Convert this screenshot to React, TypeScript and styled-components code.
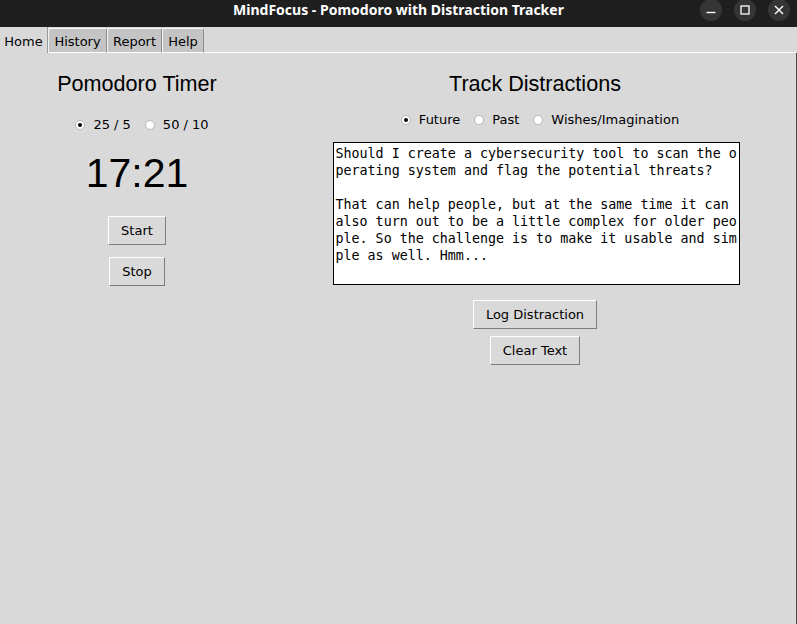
import React from "react";
import styled, { createGlobalStyle } from "styled-components";

const Global = createGlobalStyle`
  html, body { margin: 0; padding: 0; background: #d9d9d9; }
  #root { width: 797px; height: 624px; overflow: hidden; }
`;

const Window = styled.div`
  width: 797px;
  height: 624px;
  display: flex;
  flex-direction: column;
  background: #d9d9d9;
  font-family: "DejaVu Sans", sans-serif;
  color: #000;
`;

const TitleBar = styled.div`
  height: 27px;
  flex: none;
  background: #1f1f1f;
  display: grid;
  grid-template-columns: 1fr auto 1fr;
  align-items: start;
`;

const TitleText = styled.div`
  font-family: "Noto Sans", sans-serif;
  font-weight: 700;
  font-size: 14px;
  line-height: 20px;
  color: #ffffff;
`;

const Controls = styled.div`
  justify-self: end;
  display: flex;
  gap: 12px;
  padding: 0 7px 0 0;
`;

const CtrlButton = styled.div`
  width: 22px;
  height: 22px;
  border-radius: 50%;
  background: #353535;
  display: flex;
  align-items: center;
  justify-content: center;
  margin-top: -1px;
`;

const TabStrip = styled.div`
  height: 26px;
  flex: none;
  display: flex;
  align-items: flex-end;
`;

const Tab = styled.div<{ $selected?: boolean; $w: number }>`
  box-sizing: border-box;
  width: ${(p) => p.$w}px;
  font-size: 13px;
  text-align: center;
  line-height: 21px;
  white-space: nowrap;
  ${(p) =>
    p.$selected
      ? `
    height: 26px;
    padding-top: 4px;
    background: #d9d9d9;
    border-right: 1px solid #9a9a9a;
  `
      : `
    height: 25px;
    padding-top: 2px;
    background: #c4c4c4;
    border-top: 1px solid #f4f4f4;
    border-left: 1px solid #f4f4f4;
    border-right: 1px solid #8c8c8c;
    border-bottom: 1px solid #ffffff;
    border-radius: 3px 3px 0 0;
  `}
`;

const TabFill = styled.div`
  flex: 1;
  height: 1px;
  background: #ffffff;
  margin-right: 1px;
`;

const Body = styled.div`
  flex: 1;
  display: flex;
  border-right: 1px solid #4a4a4a;
`;

const Column = styled.div<{ $w?: number }>`
  ${(p) => (p.$w ? `width: ${p.$w}px; flex: none;` : `flex: 1;`)}
  display: flex;
  flex-direction: column;
  align-items: center;
`;

const Heading = styled.div`
  margin-top: 18px;
  font-family: "Liberation Sans", Arial, sans-serif;
  font-size: 21.6px;
  line-height: 26px;
  height: 26px;
`;

const RadioRow = styled.div<{ $top: number; $indent: number }>`
  margin-top: ${(p) => p.$top}px;
  padding-left: ${(p) => p.$indent}px;
  display: flex;
  gap: 14px;
  height: 20px;
  align-items: center;
`;

const RadioItem = styled.label`
  display: flex;
  align-items: center;
  gap: 8px;
  font-size: 13px;
  line-height: 20px;
  white-space: nowrap;
`;

const Indicator = styled.span<{ $on?: boolean }>`
  box-sizing: border-box;
  width: 10px;
  height: 10px;
  border-radius: 50%;
  background: #ffffff;
  border: 1px solid #b8b8b8;
  display: flex;
  align-items: center;
  justify-content: center;
  &::after {
    content: "";
    width: 4px;
    height: 4px;
    border-radius: 50%;
    background: ${(p) => (p.$on ? "#000" : "transparent")};
  }
`;

const Timer = styled.div`
  margin-top: 13px;
  font-family: "Liberation Sans", Arial, sans-serif;
  font-size: 41px;
  line-height: 50px;
  height: 50px;
`;

const Button = styled.button<{ $top: number }>`
  margin-top: ${(p) => p.$top}px;
  box-sizing: border-box;
  height: 29px;
  padding: 0 12px;
  background: #d9d9d9;
  border: 1px solid;
  border-color: #ffffff #7d7d7d #7d7d7d #ffffff;
  border-radius: 0;
  font-family: "DejaVu Sans", sans-serif;
  font-size: 13px;
  line-height: 27px;
  color: #000;
`;

const TextArea = styled.div`
  margin-top: 12px;
  margin-left: 2px;
  box-sizing: border-box;
  width: 407px;
  height: 143px;
  background: #ffffff;
  border: 1px solid #000;
  padding: 2px 0 0 2px;
  font-family: "DejaVu Sans Mono", monospace;
  font-size: 13.33px;
  line-height: 17px;
  white-space: pre;
  overflow: hidden;
`;

const lines = [
  "Should I create a cybersecurity tool to scan the o",
  "perating system and flag the potential threats?",
  "",
  "That can help people, but at the same time it can",
  "also turn out to be a little complex for older peo",
  "ple. So the challenge is to make it usable and sim",
  "ple as well. Hmm...",
];

export default function App() {
  return (
    <>
      <Global />
      <Window>
        <TitleBar>
          <span />
          <TitleText>MindFocus - Pomodoro with Distraction Tracker</TitleText>
          <Controls>
            <CtrlButton>
              <svg width="12" height="12" viewBox="0 0 12 12">
                <line x1="1.5" y1="8.5" x2="10.5" y2="8.5" stroke="#fff" strokeWidth="1.4" />
              </svg>
            </CtrlButton>
            <CtrlButton>
              <svg width="12" height="12" viewBox="0 0 12 12">
                <rect x="2" y="2" width="8" height="8" fill="none" stroke="#fff" strokeWidth="1.3" />
              </svg>
            </CtrlButton>
            <CtrlButton>
              <svg width="12" height="12" viewBox="0 0 12 12">
                <path d="M2 2 L10 10 M10 2 L2 10" stroke="#fff" strokeWidth="1.4" />
              </svg>
            </CtrlButton>
          </Controls>
        </TitleBar>
        <TabStrip>
          <Tab $selected $w={48}>Home</Tab>
          <Tab $w={59}>History</Tab>
          <Tab $w={55}>Report</Tab>
          <Tab $w={42}>Help</Tab>
          <TabFill />
        </TabStrip>
        <Body>
          <Column $w={274}>
            <Heading>Pomodoro Timer</Heading>
            <RadioRow $top={18} $indent={10}>
              <RadioItem>
                <Indicator $on />
                25 / 5
              </RadioItem>
              <RadioItem>
                <Indicator />
                50 / 10
              </RadioItem>
            </RadioRow>
            <Timer>17:21</Timer>
            <Button $top={18}>Start</Button>
            <Button $top={12}>Stop</Button>
          </Column>
          <Column>
            <Heading>Track Distractions</Heading>
            <RadioRow $top={13} $indent={10}>
              <RadioItem>
                <Indicator $on />
                Future
              </RadioItem>
              <RadioItem>
                <Indicator />
                Past
              </RadioItem>
              <RadioItem>
                <Indicator />
                Wishes/Imagination
              </RadioItem>
            </RadioRow>
            <TextArea>{lines.join("\n")}</TextArea>
            <Button $top={15}>Log Distraction</Button>
            <Button $top={7}>Clear Text</Button>
          </Column>
        </Body>
      </Window>
    </>
  );
}
